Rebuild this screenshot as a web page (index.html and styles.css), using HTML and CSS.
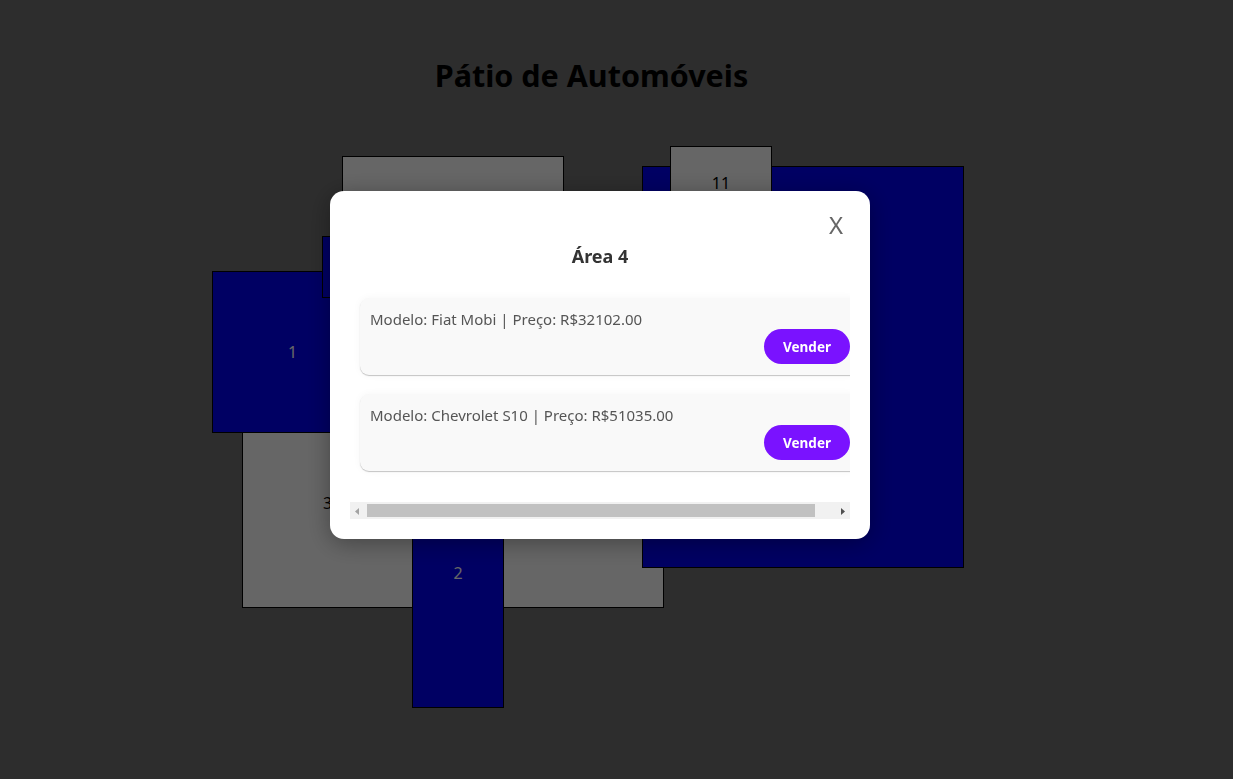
FILE: index.html
```html
<!DOCTYPE html>
<html lang="pt-BR">
<head>
<meta charset="utf-8">
<title>Pátio de Automóveis</title>
<link rel="stylesheet" href="styles.css">
</head>
<body>
  <div class="page">
    <h1 class="title">Pátio de Automóveis</h1>
    <div class="yard">
      <div class="area area-free a-top"><span class="area-label">4</span></div>
      <div class="area area-free a-five"><span class="area-label">5</span></div>
      <div class="area area-free a-three"><span class="area-label">3</span></div>
      <div class="area area-busy a-one"><span class="area-label">1</span></div>
      <div class="area area-busy a-small"><span class="area-label">6</span></div>
      <div class="area area-busy a-two"><span class="area-label">2</span></div>
      <div class="area area-busy a-big"><span class="area-label">10</span></div>
      <div class="area area-free a-eleven"><span class="area-label">11</span></div>
    </div>
  </div>

  <div class="overlay"></div>

  <div class="modal">
    <button class="close" type="button">X</button>
    <h2 class="modal-title">Área 4</h2>
    <div class="list">
      <div class="track">
        <div class="car">
          <p class="car-info">Modelo: Fiat Mobi | Preço: R$32102.00</p>
          <div class="car-actions"><button class="sell" type="button">Vender</button></div>
        </div>
        <div class="car">
          <p class="car-info">Modelo: Chevrolet S10 | Preço: R$51035.00</p>
          <div class="car-actions"><button class="sell" type="button">Vender</button></div>
        </div>
      </div>
    </div>
    <div class="hscroll" aria-hidden="true">
      <span class="hscroll-btn">
        <svg width="17" height="17" viewBox="0 0 17 17"><path d="M5 9.5 L9 6 L9 13 Z" fill="#a3a3a3"/></svg>
      </span>
      <span class="hscroll-track"><span class="hscroll-thumb"></span></span>
      <span class="hscroll-btn">
        <svg width="17" height="17" viewBox="0 0 17 17"><path d="M12 9.5 L8 6 L8 13 Z" fill="#505050"/></svg>
      </span>
    </div>
  </div>
</body>
</html>
```

FILE: styles.css
```css
html, body {
  margin: 0;
  padding: 0;
}

body {
  background: #717171;
  font-family: "Noto Sans", "Open Sans", sans-serif;
  width: 1233px;
  height: 779px;
  overflow: hidden;
}

.page {
  width: 1183px;
}

.title {
  margin: 55px 0 0;
  font-size: 30.5px;
  line-height: 40px;
  font-weight: 700;
  color: #000;
  text-align: center;
}

.yard {
  position: relative;
  height: 640px;
}

.area {
  position: absolute;
  box-sizing: border-box;
  border: 1px solid #000;
  display: flex;
  align-items: center;
  justify-content: center;
  font-size: 16px;
}

.area-free {
  background: #ffffff;
  color: #000;
}

.area-busy {
  background: #0000f8;
  color: #ffffff;
}

.a-top    { left: 342px; top: 61px;  width: 222px; height: 150px; }
.a-five   { left: 480px; top: 235px; width: 184px; height: 278px; }
.a-three  { left: 242px; top: 302px; width: 171px; height: 211px; }
.a-one    { left: 212px; top: 176px; width: 161px; height: 162px; }
.a-small  { left: 322px; top: 141px; width: 100px; height: 62px; }
.a-two    { left: 412px; top: 342px; width: 92px;  height: 271px; }
.a-big    { left: 642px; top: 71px;  width: 322px; height: 402px; }
.a-eleven { left: 670px; top: 51px;  width: 102px; height: 74px; }

.overlay {
  position: fixed;
  inset: 0;
  background: rgba(0, 0, 0, 0.6);
}

.modal {
  position: fixed;
  left: 330px;
  top: 191px;
  width: 540px;
  box-sizing: border-box;
  padding: 20px;
  background: #ffffff;
  border-radius: 14px;
  box-shadow: 0 4px 24px rgba(0, 0, 0, 0.35);
}

.close {
  position: absolute;
  top: 19px;
  right: 27px;
  padding: 0;
  border: none;
  background: none;
  font-family: "Noto Sans", sans-serif;
  font-size: 24px;
  line-height: 30px;
  color: #666;
  cursor: pointer;
}

.modal-title {
  margin: 33px 0 19px;
  font-size: 18px;
  line-height: 24px;
  font-weight: 700;
  color: #333;
  text-align: center;
}

.list {
  overflow: hidden;
}

.track {
  width: 500px;
  padding: 11px 10px 31px;
  display: flex;
  flex-direction: column;
  gap: 19px;
}

.car {
  background: #f9f9f9;
  border-radius: 9px;
  padding: 12px 10px 11px;
  box-shadow: 0 1px 1px rgba(0, 0, 0, 0.22), 0 0 8px rgba(0, 0, 0, 0.04);
}

.car-info {
  margin: 0;
  font-size: 15px;
  line-height: 19px;
  color: #555;
}

.car-actions {
  display: flex;
  justify-content: flex-end;
}

.sell {
  width: 86px;
  height: 35px;
  border: none;
  border-radius: 18px;
  background: #7a12ff;
  color: #fff;
  font-family: "Noto Sans", sans-serif;
  font-size: 13.5px;
  font-weight: 700;
  cursor: pointer;
}

.hscroll {
  display: flex;
  height: 17px;
  background: #f1f1f1;
}

.hscroll-btn {
  width: 17px;
  height: 17px;
  flex: none;
}

.hscroll-btn svg {
  display: block;
}

.hscroll-track {
  flex: 1;
  display: flex;
  align-items: center;
}

.hscroll-thumb {
  width: 448px;
  height: 13px;
  background: #c1c1c1;
}
```
